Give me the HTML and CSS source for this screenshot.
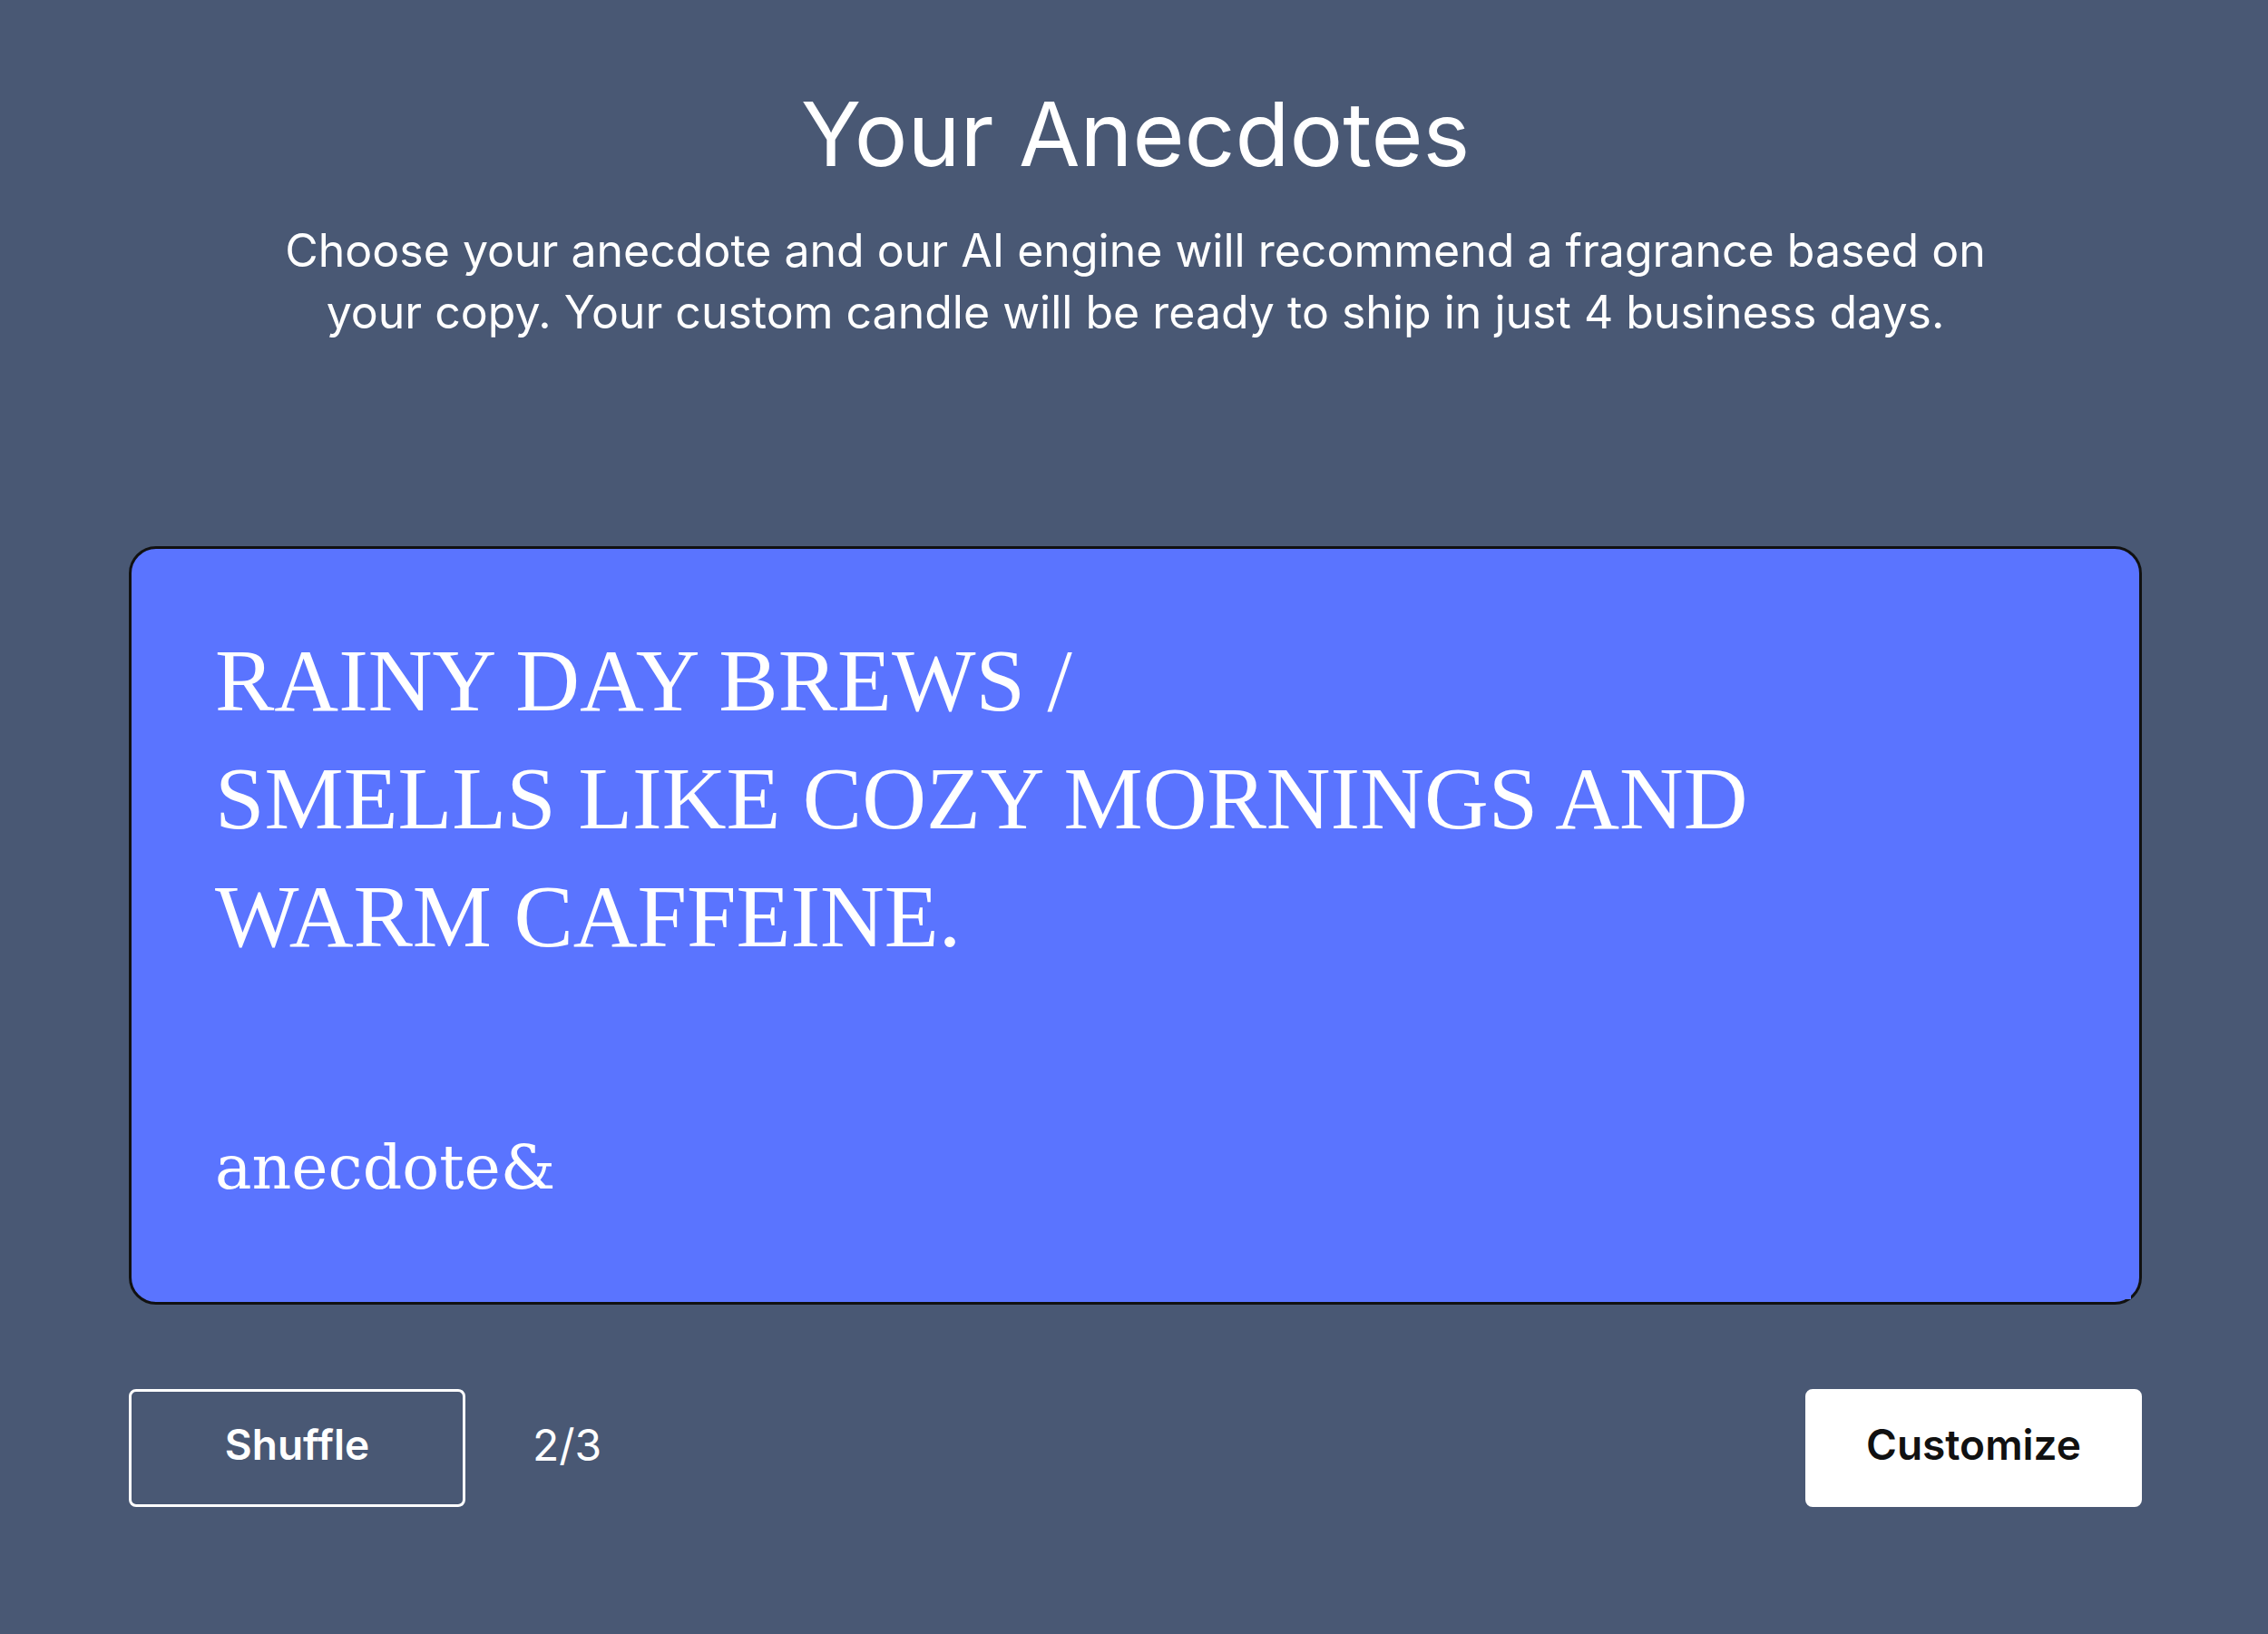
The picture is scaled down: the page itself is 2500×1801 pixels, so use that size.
FILE: index.html
```html
<!DOCTYPE html>
<html lang="en">
  <head>
    <meta charset="UTF-8" />
    <meta name="viewport" content="width=device-width, initial-scale=1.0" />
    <link rel="stylesheet" href="styles.css">
    <title>Your Anecdotes</title>
  </head>
  <body>
    <main class="page">
      <header class="intro">
        <h1 class="title">Your Anecdotes</h1>
        <p class="subtitle">
          Choose your anecdote and our AI engine will recommend a fragrance based on<br />
          your copy. Your custom candle will be ready to ship in just 4 business days.
        </p>
      </header>
      <section class="card">
        <p class="quote">RAINY DAY BREWS /<br />SMELLS LIKE COZY MORNINGS AND<br />WARM CAFFEINE.</p>
        <p class="brand">anecdote&amp;</p>
      </section>
      <div class="actions">
        <button type="button" class="button">Shuffle</button>
        <span class="counter">2/3</span>
        <button type="button" class="button button-primary">Customize</button>
      </div>
    </main>
  </body>
</html>
```

FILE: styles.css
```css
body {
  margin: 0;
  background-color: #495874;
  color: white;
  font-family: Inter, sans-serif;
}

h1,
p {
  margin: 0;
}

.page {
  padding: 90px 139px 140px 142px;
}

.intro {
  text-align: center;
}

.title {
  margin-bottom: 36px;
  font-size: 98px;
  font-weight: 400;
  line-height: 116px;
}

.subtitle {
  font-size: 50px;
  line-height: 68px;
}

.card {
  position: relative;
  margin-top: 224px;
  padding: 80px 92px 108px;
  background-color: #5a74ff;
  border: 3px solid #111;
  border-radius: 30px;
}

.card::after {
  content: '';
  position: absolute;
  right: 9px;
  bottom: 3px;
  width: 8px;
  height: 6px;
  background-color: #5a74ff;
}

.quote {
  margin-bottom: 172px;
  font-family: "Liberation Serif", serif;
  font-size: 98px;
  line-height: 130px;
}

.brand {
  font-family: "DejaVu Serif", serif;
  font-size: 68px;
  line-height: 80px;
}

.actions {
  display: flex;
  align-items: center;
  margin-top: 93px;
}

.button {
  width: 371px;
  height: 130px;
  padding: 0 0 8px;
  color: white;
  background-color: transparent;
  border: 3px solid white;
  border-radius: 8px;
  font-family: inherit;
  font-size: 46px;
  font-weight: 600;
  cursor: pointer;
}

.button-primary {
  margin-left: auto;
  color: #111;
  background-color: white;
}

.counter {
  margin-left: 74px;
  padding-bottom: 8px;
  font-size: 48px;
}
```
